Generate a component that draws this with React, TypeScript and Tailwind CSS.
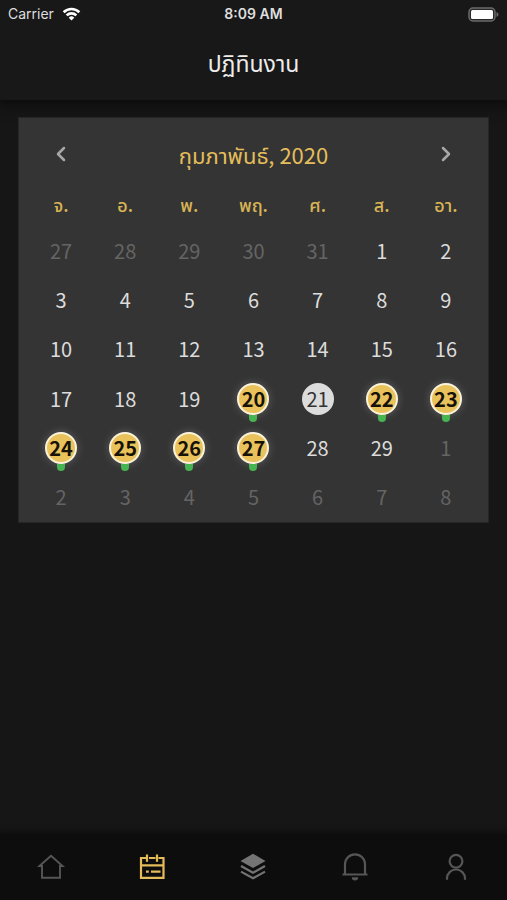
import { FiChevronLeft } from 'react-icons/fi';

type Day = {
  date: number;
  muted?: boolean;
  booked?: boolean;
  today?: boolean;
};

const weekdays = ['จ.', 'อ.', 'พ.', 'พฤ.', 'ศ.', 'ส.', 'อา.'];

const bookedDates = [20, 22, 23, 24, 25, 26, 27];

const days: Day[] = [
  ...[27, 28, 29, 30, 31].map((date) => ({ date, muted: true })),
  ...Array.from({ length: 29 }, (_, i) => ({
    date: i + 1,
    booked: bookedDates.includes(i + 1),
    today: i + 1 === 21,
  })),
  ...[1, 2, 3, 4, 5, 6, 7, 8].map((date) => ({ date, muted: true })),
];

function StatusBar() {
  return (
    <div className="grid h-7 grid-cols-3 items-center px-2 font-['Inter','Liberation_Sans',sans-serif] text-sm text-[#dedede]">
      <div className="flex items-center gap-2">
        <span>Carrier</span>
        <svg viewBox="0 0 20 15" className="h-[14px] w-[19px]" fill="none" stroke="#fff" strokeWidth="2.8">
          <path d="M1.600 5.600a12 12 0 0 1 16.800 0" />
          <path d="M4.800 9a7.400 7.400 0 0 1 10.400 0" />
          <path d="M10 14.400 7 11.400a4.300 4.300 0 0 1 6 0z" fill="#fff" stroke="none" />
        </svg>
      </div>
      <span className="text-center font-semibold">8:09 AM</span>
      <svg viewBox="0 0 31 15" className="h-[15px] w-[31px] justify-self-end">
        <rect x="1" y="1" width="26" height="13" rx="4" fill="#2a2a2a" stroke="#6a6a6a" strokeWidth="1.5" />
        <rect x="3" y="3" width="22" height="9" rx="1.500" fill="#fff" />
        <path d="M28.500 5v5c1.200-.4 2-1.400 2-2.500s-.8-2.100-2-2.500z" fill="#6a6a6a" />
      </svg>
    </div>
  );
}

function DayCell({ day }: { day: Day }) {
  if (day.booked) {
    return (
      <button className="relative flex size-8 items-center justify-center rounded-full border-2 border-[#fbf3dc] bg-[#e9c25c] font-bold text-[#16120a] shadow-[0_0_8px_rgba(255,255,255,0.22)]">
        {day.date}
        <span className="absolute top-full left-1/2 mt-0.5 h-[7px] w-2 -translate-x-1/2 rounded-b-full bg-[#46b450]" />
      </button>
    );
  }

  if (day.today) {
    return (
      <button className="flex size-8 items-center justify-center rounded-full bg-[#dcdcdc] text-[#333333]">
        {day.date}
      </button>
    );
  }

  return (
    <button className={`flex size-8 items-center justify-center ${day.muted ? 'text-[#646464]' : 'text-[#dcdcdc]'}`}>
      {day.date}
    </button>
  );
}

function Calendar() {
  return (
    <section className="mx-[18px] mt-[17px] border border-[#262626] bg-[#343434] px-[10px]">
      <div className="grid h-[72px] grid-cols-7 items-center">
        <button aria-label="เดือนก่อนหน้า" className="justify-self-center text-[#a8a8a8]">
          <FiChevronLeft className="size-6" strokeWidth={2.5} />
        </button>
        <h2 className="col-span-5 text-center text-[22px] leading-8 text-[#e4bd5a]">กุมภาพันธ์, 2020</h2>
        <button aria-label="เดือนถัดไป" className="justify-self-center text-[#a8a8a8]">
          <FiChevronLeft className="size-6 rotate-180" strokeWidth={2.5} />
        </button>
      </div>
      <div className="grid h-9 grid-cols-7 text-center text-lg leading-7 font-medium text-[#d9b455]">
        {weekdays.map((name) => (
          <span key={name}>{name}</span>
        ))}
      </div>
      <div className="grid h-[296px] grid-cols-7 grid-rows-6 place-items-center text-xl leading-8">
        {days.map((day, i) => (
          <DayCell key={i} day={day} />
        ))}
      </div>
    </section>
  );
}

function TabBar() {
  return (
    <nav className="grid h-[66px] grid-cols-5 place-items-center bg-[#0d0d0d] text-[#565656] shadow-[0_0_6px_2px_#0d0d0d]">
      <a href="#home" aria-label="หน้าแรก">
        <svg viewBox="0 0 28 28" className="size-7" fill="none" stroke="currentColor" strokeWidth="1.900">
          <path d="M2.500 13 14 2.800 25.500 13H23V24.800H5V13z" />
        </svg>
      </a>
      <a href="#calendar" aria-label="ปฏิทินงาน" className="text-[#e4bd5a]">
        <svg viewBox="0 0 28 28" className="size-7" fill="none" stroke="currentColor" strokeWidth="2.200">
          <path d="M8 5H3v19.800h22.500V5H20.500M11 5h6.500M3 12.400h22.500M9 1.500v7.300M19 1.500v7.300M8 18.600h2.800M13 18.600h9.500" />
        </svg>
      </a>
      <a href="#jobs" aria-label="รายการ">
        <svg viewBox="0 0 28 28" className="size-7" fill="none" stroke="currentColor" strokeWidth="2.200">
          <path d="M14 .800 26.500 7.900 14 15 1.500 7.900z" fill="#747474" stroke="none" />
          <path d="m2 13 12 6.700L26 13M2 18.600l12 6.700 12-6.700" stroke="#747474" />
        </svg>
      </a>
      <a href="#alerts" aria-label="แจ้งเตือน">
        <svg viewBox="0 0 28 28" className="size-7" fill="none" stroke="currentColor" strokeWidth="2.200">
          <path d="M4 21.500V11.300a10 10 0 0 1 20 0v10.200M1.500 21.500h25" />
          <path d="M10.800 24.200h6.400a3.200 3.200 0 0 1-6.400 0z" fill="currentColor" stroke="none" />
        </svg>
      </a>
      <a href="#profile" aria-label="โปรไฟล์">
        <svg viewBox="0 0 28 28" className="size-7" fill="none" stroke="currentColor" strokeWidth="2.200">
          <circle cx="14" cy="8.200" r="6.400" />
          <path d="M5 26.800v-1.300a9 9 0 0 1 18 0v1.300" />
        </svg>
      </a>
    </nav>
  );
}

export default function App() {
  return (
    <div className="flex min-h-screen flex-col bg-[#161616] font-['Noto_Sans_CJK_SC','Noto_Sans_Thai',sans-serif]">
      <header className="h-[100px] bg-[#181818] shadow-[0_0_12px_4px_#0b0b0b]">
        <StatusBar />
        <h1 className="pt-[18px] text-center text-[23px] leading-8 text-[#ececec]">ปฏิทินงาน</h1>
      </header>
      <main className="flex-1">
        <Calendar />
      </main>
      <TabBar />
    </div>
  );
}
